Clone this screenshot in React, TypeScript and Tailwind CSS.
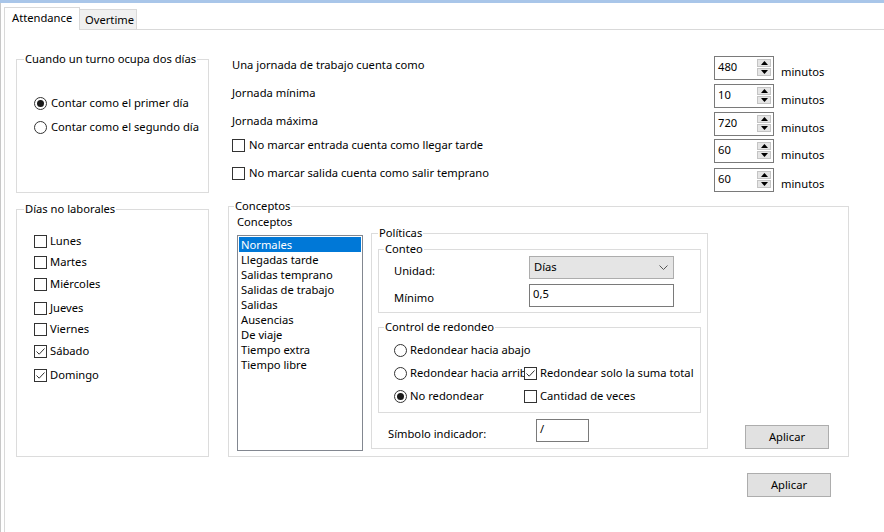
import React from 'react';

const font = "font-['Noto_Sans',sans-serif]";

function CheckBox({ checked = false }: { checked?: boolean }) {
  return (
    <span className="w-[13px] h-[13px] shrink-0 border border-[#333333] bg-white flex items-center justify-center">
      {checked && (
        <svg width="11" height="11" viewBox="0 0 11 11">
          <path d="M1.5 5.5 L4.2 8.2 L9.5 2.5" fill="none" stroke="#333333" strokeWidth="1" />
        </svg>
      )}
    </span>
  );
}

function Radio({ checked = false }: { checked?: boolean }) {
  return (
    <span className="w-[13px] h-[13px] shrink-0 rounded-full border border-[#333333] bg-white flex items-center justify-center">
      {checked && <span className="w-[7px] h-[7px] rounded-full bg-[#1a1a1a]" />}
    </span>
  );
}

function Spinner({ value }: { value: string }) {
  return (
    <div className="w-[60px] h-[24px] border border-[#7a7a7a] bg-white flex">
      <span className="flex-1 pl-[3px] leading-[20px]">{value}</span>
      <div className="flex flex-col gap-[1px] pt-[2px] pr-[2px]">
        <span className="w-[14px] h-[8px] bg-[#e5e5e5] border border-[#c4c4c4] flex items-center justify-center">
          <svg width="7" height="4" viewBox="0 0 7 4">
            <path d="M0 4 L3.5 0 L7 4 Z" fill="#000" />
          </svg>
        </span>
        <span className="w-[14px] h-[8px] bg-[#e5e5e5] border border-[#c4c4c4] flex items-center justify-center">
          <svg width="7" height="4" viewBox="0 0 7 4">
            <path d="M0 0 L7 0 L3.5 4 Z" fill="#000" />
          </svg>
        </span>
      </div>
    </div>
  );
}

function Button({ label }: { label: string }) {
  return (
    <div className="w-[84px] h-[24px] bg-[#e1e1e1] border border-[#adadad] flex items-center justify-center">
      {label}
    </div>
  );
}

const topRows = [
  { label: 'Una jornada de trabajo cuenta como', value: '480', check: false, mt: 'mt-[26px]', lt: 'pt-[1px]' },
  { label: 'Jornada mínima', value: '10', check: false, mt: 'mt-[4px]', lt: 'pt-[1px]' },
  { label: 'Jornada máxima', value: '720', check: false, mt: 'mt-[4px]', lt: 'pt-[1px]' },
  { label: 'No marcar entrada cuenta como llegar tarde', value: '60', check: true, mt: 'mt-[3px]', lt: '-mt-[2px]' },
  { label: 'No marcar salida cuenta como salir temprano', value: '60', check: true, mt: 'mt-[5px]', lt: '-mt-[3px]' },
];

const days = [
  { name: 'Lunes', checked: false, mt: 'mt-[16px]' },
  { name: 'Martes', checked: false, mt: 'mt-[5px]' },
  { name: 'Miércoles', checked: false, mt: 'mt-[6px]' },
  { name: 'Jueves', checked: false, mt: 'mt-[8px]' },
  { name: 'Viernes', checked: false, mt: 'mt-[5px]' },
  { name: 'Sábado', checked: true, mt: 'mt-[6px]' },
  { name: 'Domingo', checked: true, mt: 'mt-[8px]' },
];

const concepts = [
  'Normales',
  'Llegadas tarde',
  'Salidas temprano',
  'Salidas de trabajo',
  'Salidas',
  'Ausencias',
  'De viaje',
  'Tiempo extra',
  'Tiempo libre',
];

export default function App() {
  return (
    <div className={`${font} w-[884px] h-[532px] bg-white overflow-hidden text-[11.2px] leading-[16px] text-black whitespace-nowrap flex flex-col`}>
      <div className="h-[3px] shrink-0 bg-[#a9c6e9]" />
      <div className="flex-1 flex flex-col border-l border-[#c8c8c8]">
        {/* tabs */}
        <div className="h-[26px] shrink-0 flex items-start pl-[3px]">
          <div className="relative z-10 mt-[4px] h-[23px] w-[76px] border border-b-0 border-[#d9d9d9] bg-white pl-[7px] leading-[20px]">
            Attendance
          </div>
          <div className="mt-[6px] h-[20px] w-[57px] border border-l-0 border-b-0 border-[#d9d9d9] bg-[#f0f0f0] pl-[5px] leading-[19px]">
            Overtime
          </div>
        </div>

        {/* tab page */}
        <div className="flex-1 flex flex-col border-t border-l border-[#d9d9d9] ml-[3px]">
          <div className="flex items-start">
            {/* left column */}
            <div className="ml-[11px] w-[193px] flex flex-col">
              <fieldset className="mt-[21px] h-[142px] border border-[#dcdcdc]">
                <legend className="ml-[7px] px-[1px] leading-[16px]">Cuando un turno ocupa dos días</legend>
                <div className="pl-[17px] pt-[24px] flex flex-col">
                  <div className="h-[24px] flex items-center gap-[4px]">
                    <Radio checked />
                    <span>Contar como el primer día</span>
                  </div>
                  <div className="h-[24px] flex items-center gap-[4px]">
                    <Radio />
                    <span>Contar como el segundo día</span>
                  </div>
                </div>
              </fieldset>
              <fieldset className="mt-[8px] h-[256px] border border-[#dcdcdc]">
                <legend className="ml-[7px] px-[1px] leading-[16px]">Días no laborales</legend>
                <div className="pl-[17px] flex flex-col">
                  {days.map((d) => (
                    <div key={d.name} className={`${d.mt} h-[16px] flex items-center gap-[3px]`}>
                      <CheckBox checked={d.checked} />
                      <span>{d.name}</span>
                    </div>
                  ))}
                </div>
              </fieldset>
            </div>

            {/* right column */}
            <div className="ml-[19px] flex flex-col">
              <div className="pl-[4px] flex flex-col">
                {topRows.map((r) => (
                  <div key={r.label} className={`${r.mt} h-[24px] flex items-start`}>
                    <div className={`w-[482px] ${r.lt} flex items-center gap-[4px]`}>
                      {r.check && <CheckBox />}
                      <span>{r.label}</span>
                    </div>
                    <Spinner value={r.value} />
                    <span className="ml-[7px] pt-[8px]">minutos</span>
                  </div>
                ))}
              </div>

              <fieldset className="mt-[6px] w-[621px] border border-[#dcdcdc]">
                <legend className="ml-[5px] px-[1px] leading-[16px]">Conceptos</legend>
                <div className="pb-[5px]">
                  <div className="pl-[8px] h-[11px]">Conceptos</div>
                  <div className="pl-[8px] flex items-start">
                    {/* list */}
                    <div className="mt-[10px] w-[126px] h-[216px] border border-[#828790] p-px bg-white">
                      {concepts.map((c, i) => (
                        <div
                          key={c}
                          className={`h-[15px] leading-[15px] px-[2px] ${i === 0 ? 'bg-[#0078d7] text-white' : ''}`}
                        >
                          {c}
                        </div>
                      ))}
                    </div>

                    {/* políticas */}
                    <fieldset className="ml-[8px] w-[337px] border border-[#dcdcdc]">
                      <legend className="ml-[6px] px-[1px] leading-[16px]">Políticas</legend>
                      <div className="pb-[6px] flex flex-col">
                        <fieldset className="ml-[6px] w-[323px] border border-[#dcdcdc]">
                          <legend className="ml-[5px] px-[1px] leading-[16px]">Conteo</legend>
                          <div className="pl-[15px] pb-[5px] -mt-px flex flex-col">
                            <div className="flex items-start">
                              <span className="w-[135px] pt-[7px]">Unidad:</span>
                              <div className="w-[145px] h-[23px] bg-[#e5e5e5] border border-[#adadad] flex items-center justify-between pl-[4px] pr-[5px]">
                                <span className="-mt-[2px]">Días</span>
                                <svg width="9" height="5" viewBox="0 0 9 5">
                                  <path d="M0.5 0.5 L4.5 4.5 L8.5 0.5" fill="none" stroke="#555" strokeWidth="1" />
                                </svg>
                              </div>
                            </div>
                            <div className="mt-[5px] flex items-start">
                              <span className="w-[135px] pt-[6px]">Mínimo</span>
                              <div className="w-[145px] h-[23px] bg-white border border-[#7a7a7a] pl-[3px] leading-[18px]">
                                0,5
                              </div>
                            </div>
                          </div>
                        </fieldset>

                        <fieldset className="mt-[6px] ml-[6px] w-[323px] border border-[#dcdcdc]">
                          <legend className="ml-[5px] px-[1px] leading-[16px]">Control de redondeo</legend>
                          <div className="pl-[15px] pb-[8px] flex flex-col">
                            <div className="mt-[7px] h-[16px] flex items-center gap-[3px]">
                              <Radio />
                              <span>Redondear hacia abajo</span>
                            </div>
                            <div className="mt-[7px] h-[16px] flex items-center">
                              <div className="w-[130px] shrink-0 flex items-center gap-[3px] overflow-hidden">
                                <Radio />
                                <span>Redondear hacia arriba</span>
                              </div>
                              <div className="flex items-center gap-[3px]">
                                <CheckBox checked />
                                <span>Redondear solo la suma total</span>
                              </div>
                            </div>
                            <div className="mt-[7px] h-[16px] flex items-center">
                              <div className="w-[130px] shrink-0 flex items-center gap-[3px]">
                                <Radio checked />
                                <span>No redondear</span>
                              </div>
                              <div className="flex items-center gap-[3px]">
                                <CheckBox />
                                <span>Cantidad de veces</span>
                              </div>
                            </div>
                          </div>
                        </fieldset>

                        <div className="mt-[6px] pl-[16px] flex items-start">
                          <span className="w-[148px] pt-[7px]">Símbolo indicador:</span>
                          <div className="w-[53px] h-[23px] bg-white border border-[#7a7a7a] pl-[3px] leading-[18px]">/</div>
                        </div>
                      </div>
                    </fieldset>

                    <div className="self-end mb-[2px] ml-[37px]">
                      <Button label="Aplicar" />
                    </div>
                  </div>
                </div>
              </fieldset>
            </div>
          </div>

          <div className="mt-[16px] pl-[742px]">
            <Button label="Aplicar" />
          </div>
        </div>
      </div>
    </div>
  );
}
